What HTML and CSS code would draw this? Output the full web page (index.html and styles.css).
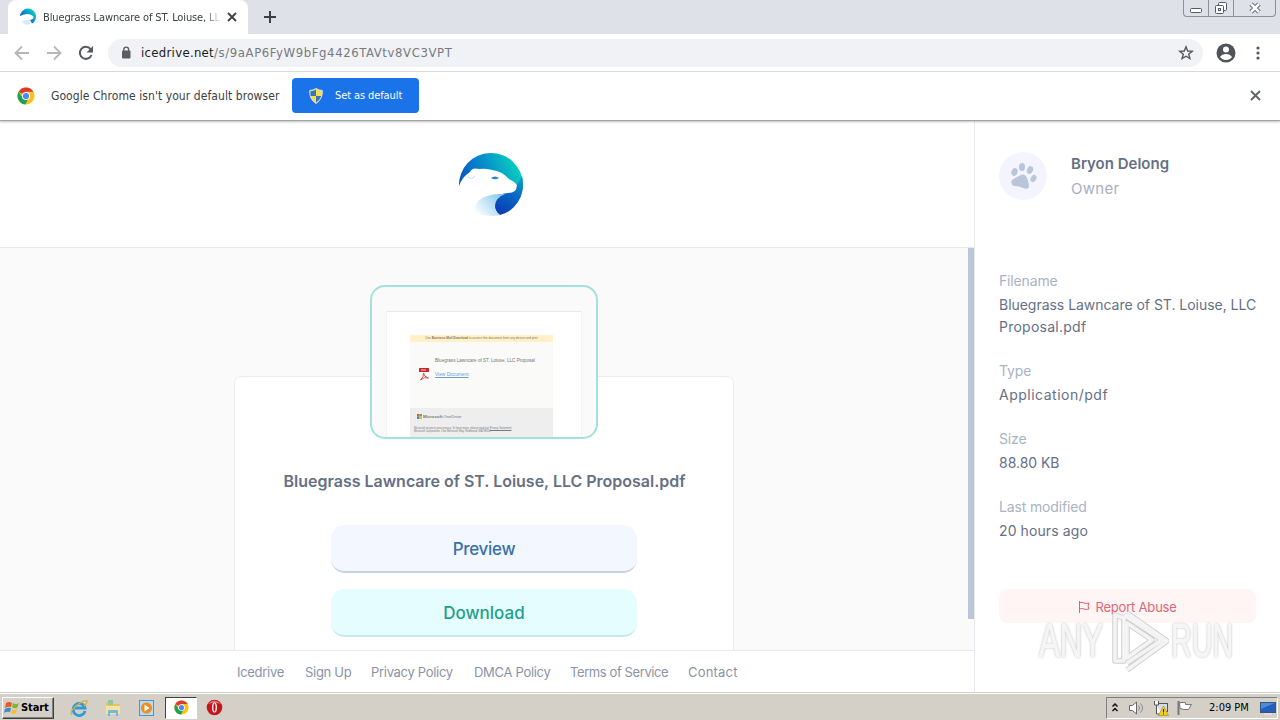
FILE: index.html
```
<!DOCTYPE html>
<html lang="en">
<head>
    <meta charset="UTF-8">
    <title>Bluegrass Lawncare of ST. Loiuse, LLC Proposal.pdf</title>
    <link rel="stylesheet" href="styles.css">
</head>
<body>
    <svg width="0" height="0" class="defs">
        <defs>
            <linearGradient id="ice" x1="0" y1="1" x2="1" y2="0">
                <stop offset="0.15" stop-color="#0a49bd"/>
                <stop offset="0.5" stop-color="#078bd0"/>
                <stop offset="0.85" stop-color="#09d0bd"/>
            </linearGradient>
            <linearGradient id="iceTop" gradientUnits="userSpaceOnUse" x1="0" y1="36" x2="56" y2="8">
                <stop offset="0" stop-color="#0a49bd"/>
                <stop offset="0.45" stop-color="#0583cc"/>
                <stop offset="1" stop-color="#09cfbe"/>
            </linearGradient>
            <linearGradient id="iceLow" x1="0" y1="0.6" x2="1" y2="0">
                <stop offset="0" stop-color="#f3fafd"/>
                <stop offset="1" stop-color="#7cc4e8"/>
            </linearGradient>
            <linearGradient id="iceDark" gradientUnits="userSpaceOnUse" x1="38" y1="58" x2="62" y2="16">
                <stop offset="0" stop-color="#0b3fb5"/>
                <stop offset="0.45" stop-color="#0a68c6"/>
                <stop offset="1" stop-color="#08b8c6"/>
            </linearGradient>
            <symbol id="chrome" viewBox="0 0 18 18">
                <circle cx="9" cy="9" r="8.5" fill="#fbc116"/>
                <path d="M9 9L1.6 4.8A8.5 8.5 0 0 1 16.4 4.8H9z" fill="#dc3a2e"/>
                <path d="M1.6 4.8L6 11.5L11 11.800L8.500 17.5A8.5 8.5 0 0 1 1.6 4.8z" fill="#1da05a"/>
                <circle cx="9" cy="9" r="4" fill="#fff"/>
                <circle cx="9" cy="9" r="3.1" fill="#4a8af4"/>
            </symbol>
        </defs>
    </svg>

    <div class="tab-strip">
        <div class="tab">
            <svg class="tab-icon" width="18" height="18" viewBox="0 0 18 18">
                <path d="M1 8A8 8 0 1 1 13 15.5L11 12Q16 11 14 8Q9 4 1 8z" fill="url(#ice)"/>
                <path d="M3 14Q6 11 11 12.500L11 16Q6 18 3 14z" fill="#d3ecf7"/>
            </svg>
            <span class="tab-title">Bluegrass Lawncare of ST. Loiuse, LL</span>
            <svg class="tab-close" width="10" height="10" viewBox="0 0 10 10"><path d="M1 1l8 8M9 1l-8 8" stroke="#3c4043" stroke-width="1.800"/></svg>
        </div>
        <svg class="new-tab" width="12" height="12" viewBox="0 0 12 12"><path d="M6 0v12M0 6h12" stroke="#3c4043" stroke-width="2"/></svg>
        <div class="window-buttons">
            <span><svg width="14" height="16" viewBox="0 0 14 16"><rect x="1.500" y="8.500" width="11" height="4" rx="1" fill="#fff" stroke="#555b66"/></svg></span>
            <span><svg width="14" height="16" viewBox="0 0 14 16"><rect x="4.500" y="2.500" width="8" height="8" rx="1" fill="#fff" stroke="#555b66"/><rect x="1.500" y="5.500" width="8" height="8" rx="1" fill="#fff" stroke="#555b66"/><rect x="4.500" y="8.500" width="2" height="2" fill="none" stroke="#555b66"/></svg></span>
            <span class="wide"><svg width="14" height="16" viewBox="0 0 14 16"><path d="M3 4l8 8M11 4l-8 8" stroke="#555b66" stroke-width="4.500"/><path d="M3 4l8 8M11 4l-8 8" stroke="#fff" stroke-width="2.500"/></svg></span>
        </div>
    </div>

    <div class="toolbar">
        <svg width="16" height="16" viewBox="0 0 16 16"><path d="M15 8H2M8 1.500L1.500 8L8 14.500" fill="none" stroke="#b5b7ba" stroke-width="1.800"/></svg>
        <svg width="16" height="16" viewBox="0 0 16 16"><path d="M1 8H14M8 1.500L14.500 8L8 14.500" fill="none" stroke="#b5b7ba" stroke-width="1.800"/></svg>
        <svg width="16" height="16" viewBox="0 0 16 16"><path d="M13.500 10A6 6 0 1 1 12.500 4" fill="none" stroke="#55585c" stroke-width="2"/><path d="M15 1v6.500H8.500z" fill="#55585c"/></svg>
        <div class="address-bar">
            <svg class="lock" width="10" height="13" viewBox="0 0 10 13"><rect x="1" y="4.500" width="8.500" height="8" rx="1" fill="#5a5d61"/><path d="M2.800 5V3.500a2.400 2.400 0 0 1 4.800 0V5" fill="none" stroke="#5a5d61" stroke-width="1.400"/></svg>
            <span class="url"><b>icedrive.net</b>/s/9aAP6FyW9bFg4426TAVtv8VC3VPT</span>
            <svg class="star" width="16" height="16" viewBox="0 0 16 16"><path d="M8 1.800l1.700 4.200 4.500.3-3.500 2.900 1.200 4.400L8 11.200l-3.900 2.400 1.200-4.400-3.500-2.900 4.500-.3z" fill="none" stroke="#55585c" stroke-width="1.400"/></svg>
        </div>
        <svg class="profile" width="20" height="20" viewBox="0 0 20 20"><circle cx="10" cy="10" r="9.500" fill="#505357"/><circle cx="10" cy="6.500" r="3" fill="#fff"/><path d="M4 14Q6 11 10 11T16 14Q14 17 10 17T4 14z" fill="#fff"/></svg>
        <svg class="menu" width="4" height="14" viewBox="0 0 4 14"><g fill="#55585c"><circle cx="2" cy="2" r="1.600"/><circle cx="2" cy="7" r="1.600"/><circle cx="2" cy="12" r="1.600"/></g></svg>
    </div>

    <div class="infobar">
        <svg width="18" height="18"><use href="#chrome"/></svg>
        <span class="infobar-text">Google Chrome isn't your default browser</span>
        <div class="default-button">
            <svg width="14" height="16" viewBox="0 0 14 16">
                <path d="M7 .5Q10 2.500 13.300 2.500Q13.800 11 7 15.500Q.2 11 .7 2.500Q4 2.500 7 .5z" fill="#f4dc55" stroke="#d8e1e5"/>
                <path d="M7 1.500V8H1.700Q1.200 6 1.500 3.300Q4.500 3 7 1.500zM7 8h5.300Q11 12 7 14.500z" fill="#3377b9"/>
            </svg>
            <span>Set as default</span>
        </div>
        <svg class="infobar-close" width="11" height="11" viewBox="0 0 11 11"><path d="M1 1l9 9M10 1l-9 9" stroke="#5f6368" stroke-width="1.900"/></svg>
    </div>

    <div class="page">
        <div class="main">
            <div class="header">
                <svg width="64" height="64" viewBox="0 0 64 64">
                    <path d="M0 34A32 32 0 0 1 64 32Q64 42 58 50L50 42Q58 41 58 34Q58 31 50 27Q43 19 33 18Q26 16 20 17Q13 15 11 20Q3 25 0 34z" fill="url(#iceTop)"/>
                    <path d="M36 48Q38 42 49 41Q58 41 58 33Q59 31 63 24Q67 42 55 55Q49 61 41 63Q34 58 36 48z" fill="url(#iceDark)"/>
                    <path d="M15 59Q17 43 40 42L46 42Q36 46 36 54Q36 61 41 63Q27 66 15 59z" fill="url(#iceLow)"/>
                    <path d="M32 26q4-3 8 0q-4 2.500-8 0z" fill="#2684c7"/>
                    <path d="M9 25q4 3 7-1" fill="none" stroke="#bde0f0"/>
                </svg>
            </div>
            <div class="content">
                <div class="file-card">
                    <div class="thumb">
                        <div class="sheet">
                            <div class="mail">
                                <div class="mail-banner">Use <b>Business Mail Download</b> to access this document from any device and print</div>
                                <div class="mail-body">
                                    <svg width="10" height="13" viewBox="0 0 10 13"><rect width="10" height="4" rx="0.500" fill="#c4292b"/><path d="M1.500 12Q5 9 4.500 5Q5 9 9.500 10Q5 8.500 1.500 12z" fill="none" stroke="#c75558" stroke-width="1"/><path d="M2 2h5" stroke="#eed0d0"/></svg>
                                    <div>
                                        <p>Bluegrass Lawncare of ST. Loiuse, LLC Proposal</p>
                                        <a>View Document</a>
                                    </div>
                                </div>
                                <div class="mail-footer">
                                    <div class="mail-brand"><svg width="5" height="5" viewBox="0 0 4 4"><path d="M0 0h2v2H0z" fill="#e8582f"/><path d="M2 0h2v2H2z" fill="#78a83b"/><path d="M0 2h2v2H0z" fill="#388cc9"/><path d="M2 2h2v2H2z" fill="#f0b92a"/></svg><b>Microsoft</b> OneDrive</div>
                                    <p>Microsoft respects your privacy. To learn more, please read our <u>Privacy Statement</u><br>Microsoft Corporation, One Microsoft Way, Redmond, WA 98052</p>
                                </div>
                            </div>
                        </div>
                    </div>
                    <h1>Bluegrass Lawncare of ST. Loiuse, LLC Proposal.pdf</h1>
                    <div class="button preview">Preview</div>
                    <div class="button download">Download</div>
                </div>
                <div class="scrollbar"></div>
            </div>
            <div class="footer">
                <a>Icedrive</a>
                <a>Sign Up</a>
                <a>Privacy Policy</a>
                <a>DMCA Policy</a>
                <a>Terms of Service</a>
                <a>Contact</a>
            </div>
        </div>
        <div class="sidebar">
            <div class="owner">
                <div class="avatar">
                    <svg width="28" height="28" viewBox="0 0 28 28" fill="#b9c5da">
                        <ellipse cx="5.500" cy="10" rx="3" ry="4" transform="rotate(18 5.500 10)"/>
                        <ellipse cx="13" cy="5" rx="3" ry="3.900"/>
                        <ellipse cx="21" cy="8" rx="3" ry="4" transform="rotate(22 21 8)"/>
                        <ellipse cx="24.500" cy="16.500" rx="2.700" ry="3.800" transform="rotate(30 24.500 16.500)"/>
                        <path d="M12 13Q16 11 18 16Q20 20 20 25Q19 28 14 26Q10 24 5 24Q1 22 3 18Q6 16 8 15z"/>
                    </svg>
                </div>
                <div>
                    <div class="owner-name">Bryon Delong</div>
                    <div class="owner-role">Owner</div>
                </div>
            </div>
            <div class="detail">
                <label>Filename</label>
                <p>Bluegrass Lawncare of ST. Loiuse, LLC<br><span class="pdf-line">Proposal.pdf</span></p>
            </div>
            <div class="detail">
                <label>Type</label>
                <p class="type">Application/pdf</p>
            </div>
            <div class="detail">
                <label>Size</label>
                <p class="size">88.80 KB</p>
            </div>
            <div class="detail">
                <label>Last modified</label>
                <p class="modified">20 hours ago</p>
            </div>
            <div class="report">
                <svg width="12" height="12" viewBox="0 0 12 12"><path d="M1.500 0v12M1.500 1.500Q4 1 6 2T11 2L10 5L11 8Q8 9 6 8T1.500 8" fill="none" stroke="#e2606d"/></svg>
                <span>Report Abuse</span>
            </div>
            <div class="watermark">
                <span>ANY</span>
                <svg width="58" height="64" viewBox="0 0 58 64"><g fill="none" stroke-linejoin="round"><path d="M4 6v46h9V9zM13 6l38 25-35 23M16 14v35l25-18zM16 61l40-29L16 4" stroke="#d0d0d2" stroke-width="5.500"/><path d="M4 6v46h9V9zM13 6l38 25-35 23M16 14v35l25-18zM16 61l40-29L16 4" stroke="#f4f4f5" stroke-width="3.500"/></g></svg>
                <span class="run">RUN</span>
            </div>
        </div>
    </div>

    <div class="taskbar">
        <div class="start">
            <svg width="16" height="16" viewBox="0 0 16 16"><path d="M2 3Q5 1 8 3L7 7Q4 6 1 8z" fill="#e65a28"/><path d="M9 3Q12 5 15 3L13 8Q10 9 8 7z" fill="#81b338"/><path d="M1 9Q4 7 7 8L6 12Q3 11 0 13z" fill="#3c8bce"/><path d="M8 9Q10 11 13 9L12 13Q9 15 7 13z" fill="#f3bf31"/></svg>
            <span>Start</span>
        </div>
        <div class="task"><svg width="18" height="18" viewBox="0 0 18 18"><path d="M15 12A6 6 0 1 1 15 9H5" fill="none" stroke="#2f9bdb" stroke-width="2.800"/><path d="M2 16Q-1 13 6 7T17 2Q18 4 14 7" fill="none" stroke="#e0ad38" stroke-width="1.300"/></svg></div>
        <div class="task"><svg width="18" height="18" viewBox="0 0 18 18"><path d="M2 3h6l1 2h7v10H2z" fill="#e5c762"/><path d="M4 1h5v5H4z" fill="#8fc8a0"/><path d="M2 7h14v8H2z" fill="#f5e49b"/><path d="M4 17v-5q0-1 1-1h8q1 0 1 1v5h-2v-3H6v3z" fill="#71b8dc"/></svg></div>
        <div class="task"><svg width="18" height="18" viewBox="0 0 18 18"><rect x="1.500" y="1.500" width="14" height="15" fill="#b4dbf3" stroke="#5593bf"/><circle cx="8.500" cy="9" r="5.500" fill="#ee8c1d"/><path d="M6.500 5.500l5 3.500-5 3.500z" fill="#fff"/></svg></div>
        <div class="task active"><svg width="15" height="15"><use href="#chrome"/></svg></div>
        <div class="task"><svg width="17" height="17" viewBox="0 0 17 17"><circle cx="8.500" cy="8.500" r="7.800" fill="#c3171d"/><path d="M2 5Q8 -2 15 5Q9 3 2 5z" fill="#e66a6d"/><ellipse cx="8.500" cy="8.500" rx="2.400" ry="5" fill="#fff"/><ellipse cx="8.500" cy="8.500" rx="1.100" ry="4" fill="#a7161b"/></svg></div>
        <div class="tray">
            <svg width="8" height="11" viewBox="0 0 8 11"><path d="M1.500 4.500L4 2l2.500 2.500M1.500 9L4 6.500L6.500 9" fill="none" stroke="#111" stroke-width="1.500"/></svg>
            <svg class="volume" width="17" height="16" viewBox="0 0 17 16"><path d="M1.500 5.500h3L8.500 2v12l-4-3.500h-3z" fill="#fff" stroke="#666"/><path d="M10.500 5.500q2 2.500 0 5M12.500 3.500q4 4.500 0 9" fill="none" stroke="#888"/></svg>
            <svg width="17" height="16" viewBox="0 0 17 16"><rect x="4.500" y="3.500" width="11" height="8" fill="#d2dce4" stroke="#555"/><path d="M2.500 1v4h4V1M4.500 5v9h6" fill="#fff" stroke="#555"/><path d="M11.500 6l5 9.500h-10z" fill="#f4ce21" stroke="#b18e13" stroke-width=".7"/><path d="M11.500 9v3.500M11.500 13.500v1" stroke="#222"/></svg>
            <svg width="17" height="16" viewBox="0 0 17 16"><path d="M2.500 1v14" stroke="#777" stroke-width="2"/><path d="M3.500 2.500h6v2h6l-3 5H8l-4-1z" fill="#fff" stroke="#777"/></svg>
            <span class="clock">2:09 PM</span>
            <svg width="16" height="14" viewBox="0 0 16 14"><rect x=".5" y="1.500" width="15" height="10" fill="#245fba" stroke="#38547e"/><path d="M1 2h14L1 8z" fill="#4a8bde"/><path d="M4 13h8" stroke="#e7eaf0"/></svg>
        </div>
    </div>
</body>
</html>
```

FILE: styles.css
```
* {
    box-sizing: border-box;
}
body {
    margin: 0;
    width: 1280px;
    height: 720px;
    overflow: hidden;
    display: flex;
    flex-direction: column;
    background: #fff;
    font-family: "DejaVu Sans Condensed", "DejaVu Sans", sans-serif;
    font-size: 12px;
    color: #3c4043;
}
svg {
    display: block;
    flex: none;
}
p {
    margin: 0;
}
.defs {
    position: absolute;
}

/* Browser chrome */
.tab-strip {
    height: 34px;
    flex: none;
    display: flex;
    background: #dee1e8;
    padding-left: 8px;
}
.tab {
    width: 240px;
    height: 34px;
    display: flex;
    align-items: center;
    padding: 0 10px 0 11px;
    background: #fff;
    border-radius: 8px 8px 0 0;
}
.tab-title {
    width: 181px;
    margin-left: 6px;
    font-size: 11px;
    letter-spacing: -0.12px;
    white-space: nowrap;
    -webkit-mask-image: linear-gradient(to right, #000 160px, transparent 179px);
    mask-image: linear-gradient(to right, #000 160px, transparent 179px);
}
.tab-close {
    margin-left: 3px;
}
.new-tab {
    margin: 11px 0 0 16px;
}
.window-buttons {
    display: flex;
    width: 93px;
    height: 17px;
    margin-left: auto;
    margin-right: 4px;
    border: 1px solid #8b909b;
    border-top: 0;
    border-radius: 0 0 4px 4px;
}
.window-buttons span {
    width: 25px;
    display: flex;
    justify-content: center;
    border-right: 1px solid #8b909b;
}
.window-buttons .wide {
    flex: 1;
    border-right: 0;
}
.toolbar {
    height: 38px;
    flex: none;
    display: flex;
    align-items: center;
    gap: 16px;
    padding-left: 14px;
    border-bottom: 1px solid #dcdddf;
}
.address-bar {
    width: 1095px;
    height: 28px;
    margin-left: -2px;
    padding: 0 9px 0 13px;
    display: flex;
    align-items: center;
    border-radius: 14px;
    background: #f0f2f5;
}
.url {
    margin-left: 10px;
    font-size: 13px;
    color: #777a7e;
    white-space: nowrap;
    letter-spacing: 0.6px;
}
.url b {
    font-weight: normal;
    letter-spacing: 0.3px;
    color: #202124;
}
.star {
    margin-left: auto;
}
.profile {
    margin-left: -3px;
}
.menu {
    margin-left: 4px;
}
.infobar {
    position: relative;
    height: 49px;
    flex: none;
    display: flex;
    align-items: center;
    padding: 0 19px 1px 17px;
    background: #fff;
    border-bottom: 1px solid #a2a2a2;
    box-shadow: 0 1px 2px rgba(0, 0, 0, 0.25);
    z-index: 1;
}
.infobar-text {
    width: 241px;
    margin-left: 16px;
    font-size: 12px;
    letter-spacing: 0.07px;
    white-space: nowrap;
}
.default-button {
    width: 127px;
    height: 35px;
    display: flex;
    align-items: center;
    gap: 12px;
    padding-left: 17px;
    border-radius: 4px;
    background: #1a73e8;
    color: #fff;
    font-size: 11px;
    letter-spacing: -0.1px;
    white-space: nowrap;
}
.infobar-close {
    margin-left: auto;
}

/* Icedrive page */
.page {
    flex: 1;
    min-height: 0;
    display: flex;
    font-family: Inter, sans-serif;
    color: #667085;
}
.main {
    width: 975px;
    flex: none;
    display: flex;
    flex-direction: column;
    border-right: 1px solid #e8e9ee;
}
.header {
    height: 127px;
    flex: none;
    display: flex;
    justify-content: center;
    padding: 31px 0 0 8px;
    border-bottom: 1px solid #e9e9ea;
}
.content {
    position: relative;
    flex: 1;
    min-height: 0;
    overflow: hidden;
    display: flex;
    justify-content: center;
    padding: 128px 6px 0 0;
    background: #fafafa;
}
.file-card {
    width: 500px;
    height: 320px;
    display: flex;
    flex-direction: column;
    align-items: center;
    border: 1px solid #ebecec;
    border-radius: 7px;
    background: #fff;
}
.thumb {
    width: 228px;
    height: 154px;
    flex: none;
    margin-top: -92px;
    padding: 24px 14px 0;
    overflow: hidden;
    border: 2px solid #a2e1dc;
    border-radius: 15px;
    background: #fafafa;
}
.sheet {
    height: 140px;
    padding: 23px 27px 0 23px;
    background: #fff;
    border: 1px solid #f3f3f3;
    border-top-color: #e9e9e9;
}
.mail {
    width: 143px;
    font-family: "Liberation Sans", sans-serif;
    color: #777;
    white-space: nowrap;
}
.mail-banner {
    height: 7px;
    line-height: 7px;
    font-size: 3.1px;
    text-align: center;
    background: #fff0c8;
    color: #81775e;
}
.mail-body {
    height: 66px;
    display: flex;
    padding: 20px 0 0 9px;
    gap: 6px;
    background: #fafaf8;
    font-size: 4.6px;
    line-height: 7px;
}
.mail-body > svg {
    margin-top: 6px;
}
.mail-body div {
    margin-top: -5px;
}
.mail-body p {
    margin-bottom: 7px;
}
.mail-body a {
    color: #6b9dd0;
    text-decoration: underline;
    font-size: 4.8px;
}
.mail-footer {
    height: 50px;
    padding: 6px 4px;
    background: #eee;
    font-size: 2.7px;
    line-height: 3px;
}
.mail-brand {
    display: flex;
    gap: 1px;
    margin: 0 0 8px 3px;
    font-size: 4.3px;
    line-height: 5px;
}
.file-card h1 {
    margin: 32px 0 34px;
    padding-left: 1px;
    font-size: 16px;
    line-height: 20px;
    font-weight: 600;
    letter-spacing: -0.01px;
    white-space: nowrap;
}
.button {
    width: 306px;
    height: 48px;
    flex: none;
    margin-bottom: 16px;
    border-radius: 14px;
    font-size: 17px;
    line-height: 48px;
    font-weight: 500;
    text-align: center;
}
.preview {
    background: #f3f7ff;
    border-bottom: 2px solid #c8d1e3;
    color: #3871a8;
    letter-spacing: -0.3px;
}
.download {
    background: #e6fdff;
    border-bottom: 2px solid #c7eae9;
    color: #22a08a;
}
.scrollbar {
    position: absolute;
    top: 0;
    right: 0;
    width: 6px;
    height: 371px;
    background: #bbc5d8;
}
.footer {
    height: 42px;
    flex: none;
    display: grid;
    grid-template-columns: 48px 46px 83px 76px 98px 50px;
    gap: 20px;
    padding-left: 237px;
    border-top: 1px solid #e8e9ec;
    font-size: 13px;
    line-height: 42px;
    letter-spacing: -0.3px;
    color: #8a93a5;
    white-space: nowrap;
}
.footer a:nth-child(5) {
    letter-spacing: -0.4px;
}
.footer a:last-child {
    letter-spacing: 0.2px;
}
.sidebar {
    position: relative;
    flex: 1;
    padding: 31px 24px 0;
}
.owner {
    display: flex;
    gap: 24px;
    height: 118px;
    white-space: nowrap;
}
.avatar {
    width: 48px;
    height: 48px;
    display: flex;
    align-items: center;
    justify-content: center;
    border-radius: 50%;
    background: #f4f4fe;
}
.owner-name {
    font-size: 15px;
    line-height: 24px;
    font-weight: 600;
}
.owner-role {
    font-size: 15px;
    line-height: 26px;
    letter-spacing: 0.3px;
    color: #a5b0c2;
}
.detail {
    margin-bottom: 22px;
}
.detail label {
    display: block;
    height: 24px;
    font-size: 14px;
    line-height: 22px;
    letter-spacing: -0.15px;
    color: #a9b3c3;
}
.detail p {
    font-size: 14px;
    line-height: 22px;
    letter-spacing: -0.03px;
    white-space: nowrap;
}
.detail .pdf-line {
    letter-spacing: 0.25px;
}
.detail .modified {
    letter-spacing: 0.1px;
}
.detail .type {
    letter-spacing: 0.5px;
}
.report {
    height: 34px;
    margin-top: 47px;
    padding-top: 1px;
    display: flex;
    align-items: center;
    justify-content: center;
    gap: 5px;
    border-radius: 8px;
    background: #fff5f5;
    color: #df6673;
    font-size: 13px;
    letter-spacing: -0.2px;
}
.watermark {
    position: absolute;
    left: 64px;
    top: 488px;
    display: flex;
    align-items: center;
    gap: 6px;
    font-family: "Liberation Sans", sans-serif;
    font-size: 48px;
    line-height: 64px;
    color: #f6f6f7;
    -webkit-text-stroke: 1px #f6f6f7;
    text-shadow: 0 0 3px #999;
}
.watermark span {
    width: 66px;
    transform: scaleX(0.65);
    transform-origin: left;
}
.watermark .run {
    margin-left: -4px;
    transform: scaleX(0.6);
}

/* Windows taskbar */
.taskbar {
    height: 28px;
    flex: none;
    display: flex;
    align-items: center;
    padding: 2px 2px 0;
    border-top: 1px solid #d4d0c8;
    box-shadow: inset 0 1px #fff;
    background: #d4d0c8;
    color: #000;
}
.start {
    width: 52px;
    height: 22px;
    display: flex;
    align-items: center;
    gap: 1px;
    padding-left: 1px;
    border: 1px solid;
    border-color: #fff #404040 #404040 #fff;
    box-shadow: inset -1px -1px #808080;
    font-weight: bold;
    font-size: 11px;
    letter-spacing: -0.1px;
    margin-right: 9px;
}
.task {
    width: 32px;
    height: 22px;
    display: flex;
    align-items: center;
    justify-content: center;
    margin-right: 2px;
}
.active {
    margin-right: 1px;
    border: 1px solid;
    border-color: #404040 #fff #fff #404040;
    background: #fff;
}
.tray {
    width: 172px;
    height: 22px;
    margin-left: auto;
    display: flex;
    align-items: center;
    padding: 0 1px 0 4px;
    gap: 7px;
    border: 1px solid;
    border-color: #808080 #fff #fff #808080;
    font-size: 11px;
}
.volume {
    margin-left: 2px;
}
.clock {
    width: 42px;
    margin: 0 3px 0 9px;
    white-space: nowrap;
}
```
